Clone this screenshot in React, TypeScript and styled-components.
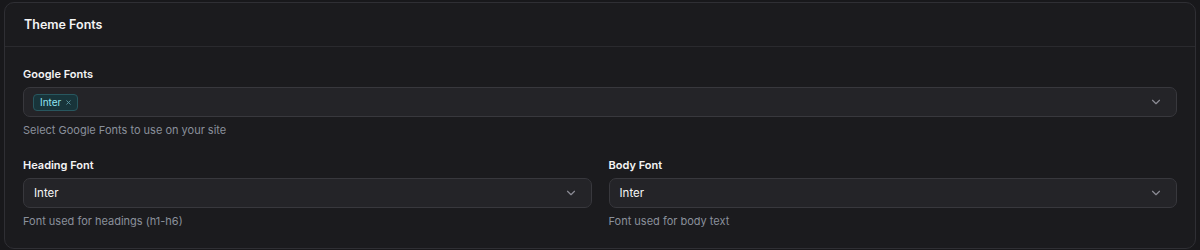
import styled, { createGlobalStyle } from 'styled-components'
import { ChevronDown, X } from 'lucide-react'

const GlobalStyle = createGlobalStyle`
  html, body {
    margin: 0;
    padding: 0;
    background: #18181b;
    font-family: Inter, "Noto Sans", sans-serif;
  }
`

type SelectProps = { value: string }

function Select({ value }: SelectProps): JSX.Element {
  return (
    <SelectBox>
      <span>{value}</span>
      <ChevronDown size={14} strokeWidth={2} color="#8b8b94" />
    </SelectBox>
  )
}

export default function App(): JSX.Element {
  return (
    <>
      <GlobalStyle />
      <Card>
        <CardHeader>Theme Fonts</CardHeader>
        <CardBody>
          <Field>
            <Label>Google Fonts</Label>
            <MultiSelect>
              <Chip>
                Inter
                <X size={7} strokeWidth={3} color="#5f9aa6" />
              </Chip>
              <ChevronDown size={14} strokeWidth={2} color="#8b8b94" />
            </MultiSelect>
            <Help>Select Google Fonts to use on your site</Help>
          </Field>
          <Columns>
            <Field>
              <Label>Heading Font</Label>
              <Select value="Inter" />
              <Help>Font used for headings (h1-h6)</Help>
            </Field>
            <Field>
              <Label>Body Font</Label>
              <Select value="Inter" />
              <Help>Font used for body text</Help>
            </Field>
          </Columns>
        </CardBody>
      </Card>
    </>
  )
}

const Card = styled.div`
  margin: 2px 4px 0;
  background: #1b1b1e;
  border: 1px solid #2f2f34;
  border-radius: 10px;
  overflow: hidden;
`

const CardHeader = styled.div`
  padding: 14px 19px 14px;
  font-size: 12.5px;
  line-height: 15px;
  font-weight: 600;
  color: #f4f4f5;
  border-bottom: 1px solid #2a2a2e;
`

const CardBody = styled.div`
  padding: 19px 18px 19px;
  display: flex;
  flex-direction: column;
  gap: 19px;
`

const Field = styled.div`
  display: flex;
  flex-direction: column;
  gap: 5px;
  min-width: 0;
`

const Columns = styled.div`
  display: grid;
  grid-template-columns: 1fr 1fr;
  column-gap: 17px;
`

const Label = styled.div`
  font-size: 11px;
  line-height: 16px;
  font-weight: 600;
  color: #f4f4f5;
`

const Help = styled.div`
  font-size: 11px;
  line-height: 16px;
  color: #8a909b;
`

const SelectBox = styled.div`
  height: 30px;
  box-sizing: border-box;
  display: flex;
  align-items: center;
  justify-content: space-between;
  padding: 0 13px 0 10px;
  background: #242428;
  border: 1px solid #38383d;
  border-radius: 7px;
  font-size: 11.5px;
  color: #f4f4f5;
`

const MultiSelect = styled(SelectBox)`
  padding-left: 9px;
`

const Chip = styled.span`
  display: inline-flex;
  align-items: center;
  gap: 4px;
  height: 17px;
  box-sizing: border-box;
  padding: 0 5px 0 6px;
  background: #18343a;
  border: 1px solid #28575f;
  border-radius: 4px;
  font-size: 10px;
  color: #8fe3f0;
`
